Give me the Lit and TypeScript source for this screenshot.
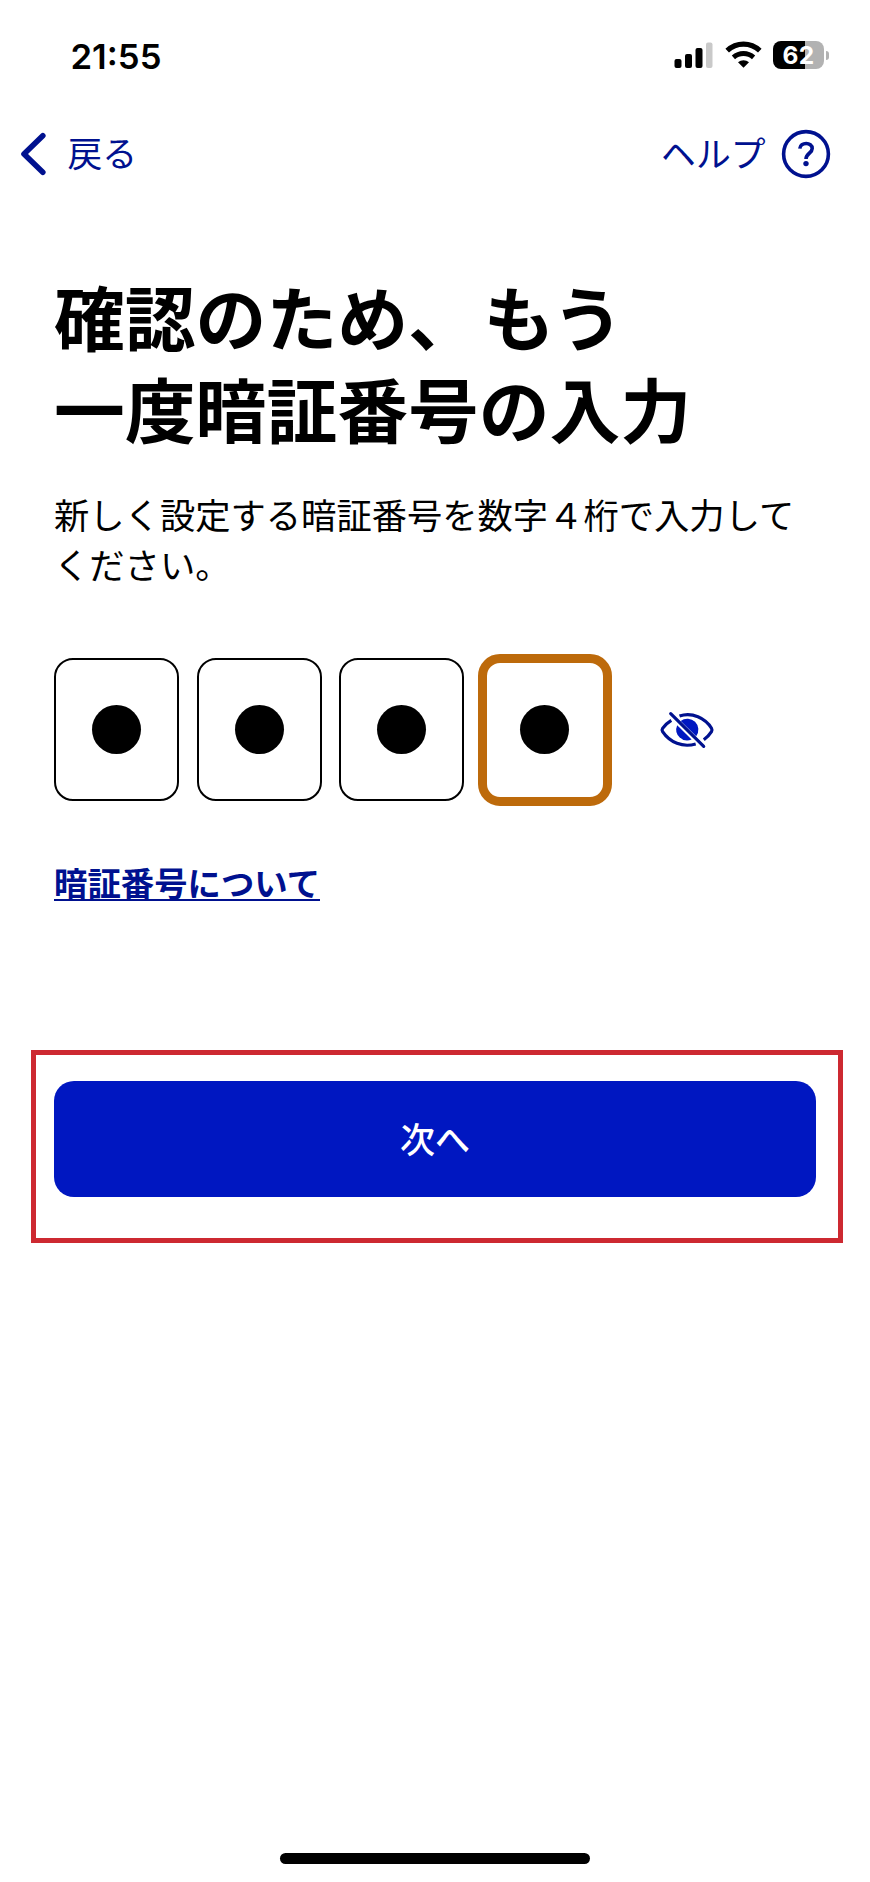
import { LitElement, html, css } from "lit";
import { customElement, state } from "lit/decorators.js";
import { classMap } from "lit/directives/class-map.js";

@customElement("status-bar")
class StatusBar extends LitElement {
  static styles = css`
    :host {
      display: flex;
      justify-content: space-between;
      align-items: center;
      height: 110px;
      padding: 0 41px 0 70.5px;
      box-sizing: border-box;
    }
    .time {
      padding-top: 2px;
      font: 600 34.7px/1 Inter, sans-serif;
      letter-spacing: 0;
    }
    .icons {
      display: flex;
      align-items: center;
    }
    .signal {
      width: 39px;
      height: 28px;
      margin-right: 12px;
    }
    .wifi {
      width: 37px;
      height: 28px;
      margin-right: 11px;
    }
    .battery {
      display: grid;
      place-items: center;
      width: 51px;
      height: 28px;
      border-radius: 8px;
      background: linear-gradient(90deg, #000 62%, #b2b2b2 62%);
      color: #fff;
      font: 700 24.5px/29px Inter, sans-serif;
      letter-spacing: 0.4px;
    }
    .nub {
      width: 3px;
      height: 9px;
      margin-left: 2px;
      border-radius: 0 4px 4px 0;
      background: #b2b2b2;
    }
  `;

  render() {
    return html`
      <span class="time">21:55</span>
      <div class="icons">
        <svg class="signal" viewBox="0 0 39 28">
          <rect x="0.5" y="18" width="7" height="9" rx="2" />
          <rect x="11" y="13" width="7" height="14" rx="2" />
          <rect x="21.5" y="7" width="7" height="20" rx="2" />
          <rect x="32" y="1.5" width="6.5" height="25.5" rx="2" fill="#c9c9c9" />
        </svg>
        <svg class="wifi" viewBox="0 0 37 28">
          <path d="M2.2 9.6C11.5 .9 25.5 .9 34.8 9.6" fill="none" stroke="#000" stroke-width="5.2" />
          <path d="M8.4 16.4C14.2 11.2 22.8 11.2 28.6 16.4" fill="none" stroke="#000" stroke-width="4.8" />
          <path d="M13 21.3C16.2 18.6 20.8 18.6 24 21.3L18.5 26.8Z" />
        </svg>
        <div class="battery">62</div>
        <div class="nub"></div>
      </div>
    `;
  }
}

@customElement("nav-bar")
class NavBar extends LitElement {
  static styles = css`
    :host {
      display: flex;
      justify-content: space-between;
      align-items: center;
      height: 88px;
      padding: 0 39px 0 19px;
      box-sizing: border-box;
      color: #00118f;
      font-size: 34.8px;
      line-height: 50px;
    }
    .action {
      display: flex;
      align-items: center;
    }
    .label {
      padding-bottom: 5px;
    }
    .chevron {
      width: 28px;
      height: 44px;
      margin-right: 20.5px;
    }
    .help {
      width: 50px;
      height: 50px;
      margin-left: 15.5px;
    }
  `;

  render() {
    return html`
      <div class="action">
        <svg class="chevron" viewBox="0 0 28 44">
          <path d="M23.8 3.8L5 22L23.8 40.2" fill="none" stroke="#00118f" stroke-width="5.6" stroke-linecap="round" stroke-linejoin="round" />
        </svg>
        <span class="label">戻る</span>
      </div>
      <div class="action">
        <span class="label">ヘルプ</span>
        <svg class="help" viewBox="0 0 50 50" fill="none" stroke="#00118f">
          <circle cx="25" cy="25" r="22.4" stroke-width="3.6" />
          <path d="M18.8 19.6C19.2 12.9 31.2 12.7 31.2 19.5C31.2 24.4 25 24.2 25 30" stroke-width="3.6" />
          <circle cx="25" cy="34.6" r="2.7" fill="#00118f" stroke="none" />
        </svg>
      </div>
    `;
  }
}

@customElement("pin-entry")
class PinEntry extends LitElement {
  static styles = css`
    :host {
      display: flex;
      align-items: center;
      gap: 17.7px;
      height: 143px;
    }
    .cell {
      display: grid;
      place-items: center;
      width: 125px;
      height: 143px;
      box-sizing: border-box;
      border: 2px solid #000;
      border-radius: 19px;
    }
    .focused {
      width: 134px;
      height: 152px;
      margin: 0 -4.5px;
      border: 9px solid #bd6a0b;
      border-radius: 22px;
    }
    .dot {
      width: 49px;
      height: 49px;
      border-radius: 50%;
      background: #000;
    }
    .toggle {
      width: 56px;
      height: 40px;
      margin-left: 34px;
    }
  `;

  @state() private active = 3;

  render() {
    return html`
      ${[0, 1, 2, 3].map(
        (i) => html`<div class=${classMap({ cell: true, focused: i === this.active })}><div class="dot"></div></div>`
      )}
      <svg class="toggle" viewBox="0 0 56 40">
        <g fill="none" stroke="#00118f" stroke-width="3.2">
          <path d="M20.5 6C33 1.5 46.5 8.2 52.5 18.2Q53.5 20 52.5 21.6Q49.5 26.3 44.8 29.7" />
          <path d="M12.3 10.3Q7 13.5 3.6 18.3Q2.5 20 3.6 21.7C11 32.7 23.5 37.7 36.7 34" />
          <path d="M11.7 3.6L44.7 36.4" stroke-linecap="round" />
        </g>
        <path d="M21.7 10.9A11 11 0 0 1 37.2 26.2Z" fill="#0017c1" />
        <path d="M18.2 15.2L32.6 29.6A11 11 0 0 1 18.2 15.2Z" fill="#0017c1" />
      </svg>
    `;
  }
}

@customElement("app-root")
class AppRoot extends LitElement {
  static styles = css`
    :host {
      display: flex;
      flex-direction: column;
      width: 870px;
      height: 1882px;
      background: #fff;
      color: #000;
      font-family: "Noto Sans CJK JP", sans-serif;
    }
    .content {
      display: flex;
      flex-direction: column;
      align-items: flex-start;
      padding: 71px 0 0 54px;
    }
    .title {
      margin: 0;
      font-size: 70.8px;
      line-height: 92px;
      font-weight: 700;
    }
    .comma {
      margin-right: 5px;
    }
    .lead {
      margin: 36px 0 0;
      font-size: 35.3px;
      line-height: 50px;
    }
    .pins {
      margin-top: 69px;
    }
    .link {
      margin-top: 62px;
      height: 36px;
      border-bottom: 2px solid #00118f;
      color: #00118f;
      font-size: 33.4px;
      line-height: 38px;
      font-weight: 700;
      text-decoration: none;
    }
    .callout {
      display: flex;
      width: 812px;
      height: 193px;
      margin: 149px 0 0 31px;
      padding: 26px 22px 0 18px;
      box-sizing: border-box;
      border: 5px solid #cd2931;
    }
    .next {
      flex: 1;
      height: 116px;
      padding: 0 0 2px;
      border: 0;
      border-radius: 20px;
      background: #0017c1;
      color: #fff;
      font: 500 35px/50px "Noto Sans CJK JP", sans-serif;
    }
    .home {
      width: 310px;
      height: 11px;
      margin: auto auto 18px;
      border-radius: 6px;
      background: #000;
    }
  `;

  render() {
    return html`
      <status-bar></status-bar>
      <nav-bar></nav-bar>
      <main class="content">
        <h1 class="title">確認のため<span class="comma">、</span>もう<br />一度暗証番号の入力</h1>
        <p class="lead">新しく設定する暗証番号を数字４桁で入力して<br />ください。</p>
        <pin-entry class="pins"></pin-entry>
        <a class="link">暗証番号について</a>
      </main>
      <div class="callout"><button class="next">次へ</button></div>
      <div class="home"></div>
    `;
  }
}
